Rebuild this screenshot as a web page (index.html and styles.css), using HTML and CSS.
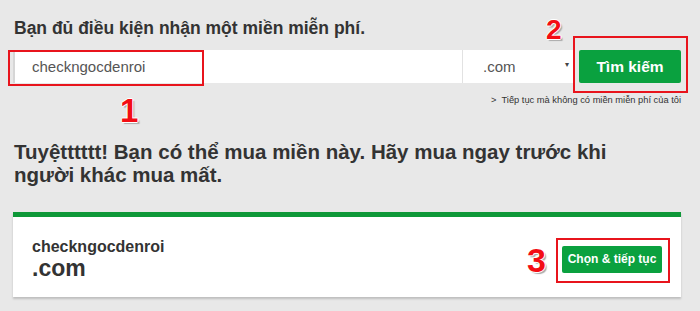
FILE: index.html
```html
<!DOCTYPE html>
<html lang="vi">
<head>
<meta charset="utf-8">
<link rel="stylesheet" href="styles.css">
</head>
<body>
<div class="page">
  <h2 class="title">Bạn đủ điều kiện nhận một miền miễn phí.</h2>
  <div class="search">
    <div class="field">
      <span class="field-text">checkngocdenroi</span>
      <span class="mark mark-input"></span>
      <span class="num num-1">1</span>
    </div>
    <div class="select"><span>.com</span><span class="caret">▾</span></div>
    <div class="btn-wrap">
      <button class="btn-search">Tìm kiếm</button>
      <span class="mark mark-search"></span>
      <span class="num num-2">2</span>
    </div>
  </div>
  <div class="skip">&gt;&nbsp; Tiếp tục mà không có miền miễn phí của tôi</div>
  <h1 class="headline">Tuyệtttttt! Bạn có thể mua miền này. Hãy mua ngay trước khi người khác mua mất.</h1>
  <div class="card">
    <div class="domain">
      <div class="domain-name">checkngocdenroi</div>
      <div class="domain-tld">.com</div>
    </div>
    <div class="btn-wrap">
      <button class="btn-choose">Chọn &amp; tiếp tục</button>
      <span class="mark mark-choose"></span>
      <span class="num num-3">3</span>
    </div>
  </div>
</div>
</body>
</html>
```
FILE: styles.css
```css
html, body {
  margin: 0;
  padding: 0;
  background: #e8e8e8;
}
body {
  font-family: "Liberation Sans", Arial, sans-serif;
  color: #333;
  width: 700px;
  height: 311px;
  overflow: hidden;
}
.page {
  padding: 18px 19px 0 13px;
}
.title {
  margin: 0 0 11px 1px;
  font-size: 17.5px;
  line-height: 21px;
  font-weight: bold;
  color: #333;
}
.search {
  display: flex;
  height: 33px;
}
.field {
  position: relative;
  flex: 1;
  background: #fff;
  border-left: 2px solid #d6d6d6;
  display: flex;
  align-items: center;
  padding-left: 17px;
}
.field-text {
  font-size: 15px;
  color: #555;
}
.select {
  position: relative;
  width: 112px;
  background: #fff;
  border-left: 1px solid #e2e2e2;
  display: flex;
  align-items: center;
  padding-left: 20px;
  box-sizing: border-box;
  font-size: 15px;
  color: #555;
}
.caret {
  position: absolute;
  right: 5px;
  top: 10px;
  font-size: 8px;
  color: #444;
}
.btn-wrap {
  position: relative;
}
.btn-search {
  margin-left: 5px;
  width: 102px;
  height: 33px;
  border: 0;
  border-radius: 2px;
  background: #0aa13f;
  color: #fff;
  font-family: inherit;
  font-weight: bold;
  font-size: 15.5px;
  padding: 0;
}
.mark {
  position: absolute;
  border: 2px solid #e8141c;
  box-sizing: border-box;
  pointer-events: none;
}
.mark-input {
  left: -7px;
  top: 0;
  width: 196px;
  height: 36px;
}
.mark-search {
  left: -1px;
  top: -14px;
  width: 115px;
  height: 57px;
}
.mark-choose {
  left: -6px;
  top: -8px;
  width: 114px;
  height: 45px;
}
.num {
  position: absolute;
  font-weight: bold;
  color: #f30d14;
  text-shadow: 1px 0 0 #fff, -1px 0 0 #fff, 0 1px 0 #fff, 0 -1px 0 #fff, 2px 2px 1px #aaa;
  line-height: 1;
}
.num-1 {
  left: 105px;
  top: 44px;
  font-size: 33px;
}
.num-2 {
  left: -28px;
  top: -34px;
  font-size: 28px;
}
.num-3 {
  left: -35px;
  top: -3px;
  font-size: 34px;
}
.skip {
  text-align: right;
  font-size: 9.3px;
  color: #333;
  margin-top: 11px;
  line-height: 12px;
}
.headline {
  margin: 34px 0 0 1px;
  width: 620px;
  font-size: 20.5px;
  line-height: 23px;
  font-weight: bold;
  color: #333;
}
.card {
  margin-top: 26px;
  background: #fff;
  border-top: 5px solid #0e9838;
  box-shadow: 0 2px 2px rgba(0, 0, 0, 0.18);
  height: 76px;
  display: flex;
  align-items: center;
  justify-content: space-between;
  padding: 4px 19px 0 19px;
}
.domain {
  color: #333;
  font-weight: bold;
}
.domain-name {
  font-size: 16px;
  line-height: 19px;
}
.domain-tld {
  font-size: 23px;
  line-height: 25px;
}
.btn-choose {
  width: 100px;
  height: 27px;
  border: 0;
  border-radius: 2px;
  background: #0aa13f;
  color: #fff;
  font-family: inherit;
  font-weight: bold;
  font-size: 12px;
  padding: 0;
}
```
